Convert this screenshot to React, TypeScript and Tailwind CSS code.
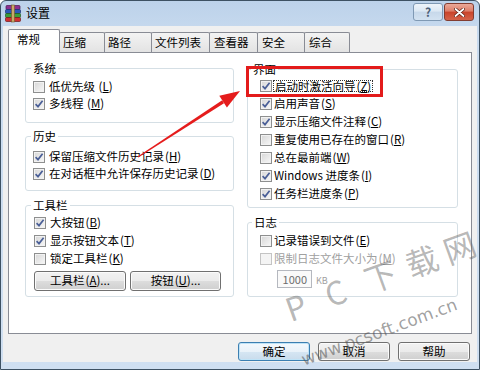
import React from 'react';

function Box({ checked, disabled }: { checked?: boolean; disabled?: boolean }) {
  return (
    <span
      className={
        disabled
          ? 'flex h-[12px] w-[12px] shrink-0 items-center justify-center border border-[#c4c4c4] bg-[#f4f4f4]'
          : 'flex h-[12px] w-[12px] shrink-0 items-center justify-center border border-[#8e8f8f] bg-[linear-gradient(135deg,#d6d6d6,#f8f8f8)] shadow-[inset_0_0_0_1px_#f2f2f2]'
      }
    >
      {checked && (
        <svg width="10" height="10" viewBox="0 0 10 10">
          <path d="M1.6 5.2 L4 7.6 L8.6 1.8" fill="none" stroke="#4a5f97" strokeWidth="1.7" />
        </svg>
      )}
    </span>
  );
}

function Label({ t, k, tail }: { t: string; k: string; tail?: string }) {
  return (
    <>
      {t}
      <span className="ml-[1px]">(</span>
      <u>{k}</u>)
      {tail}
    </>
  );
}

function Row({
  t,
  k,
  checked,
  disabled,
  focus,
  h = 'h-[17px]',
  gap = 'gap-[4px]',
}: {
  t: string;
  k: string;
  checked?: boolean;
  disabled?: boolean;
  focus?: boolean;
  h?: string;
  gap?: string;
}) {
  return (
    <div className={`flex ${h} items-center ${gap}`}>
      <Box checked={checked} disabled={disabled} />
      <span
        className={
          (disabled ? 'text-[#a0a0a0] ' : 'text-black ') +
          (focus ? 'border border-dotted border-[#333] px-[1px] leading-[10px]' : 'leading-none')
        }
      >
        <Label t={t} k={k} />
      </span>
    </div>
  );
}

function WinButton({ children, def, w = 'w-[72px]' }: { children: React.ReactNode; def?: boolean; w?: string }) {
  return (
    <div
      className={
        `flex h-[19px] ${w} items-center justify-center rounded-[3px] border text-[11.5px] leading-none text-black ` +
        (def
          ? 'border-[#3c7fb1] bg-[linear-gradient(#f4f9fd_0%,#e9f2f9_50%,#d6e6f3_51%,#c9dcec_100%)] shadow-[inset_0_0_0_1px_#bfe3f7]'
          : 'border-[#707070] bg-[linear-gradient(#f2f2f2_0%,#ebebeb_50%,#dddddd_51%,#cfcfcf_100%)] shadow-[inset_0_0_0_1px_#fbfbfb]')
      }
    >
      {children}
    </div>
  );
}

function Tab({ label, w, selected, pl = 'pl-[3px]' }: { label: string; w: string; selected?: boolean; pl?: string }) {
  if (selected) {
    return (
      <div
        className={`relative z-10 mb-[-1px] flex h-[24px] ${w} items-center ${pl} rounded-t-[2px] border border-b-0 border-[#898c95] bg-white pb-[3px] text-[11.5px] leading-none text-black`}
      >
        {label}
      </div>
    );
  }
  return (
    <div
      className={`-ml-px flex h-[20px] ${w} items-center ${pl} rounded-t-[2px] border border-b-0 border-[#898c95] bg-[linear-gradient(#f3f3f3,#e3e3e3)] text-[11.5px] leading-none text-black`}
    >
      {label}
    </div>
  );
}

export default function App() {
  return (
    <div className="relative h-[370px] w-[480px] overflow-hidden bg-white font-['Noto_Sans_CJK_SC','Noto_Sans',sans-serif]">
      <div className="flex h-full w-full flex-col rounded-t-[6px] border border-[#3d5163] bg-[linear-gradient(#bcd2ea_0%,#c9dbef_10%,#cfdff1_100%)]">
        {/* title bar */}
        <div className="flex h-[25px] shrink-0 items-start pr-[5px]">
          <svg className="ml-[3px] mt-[3px]" width="19" height="19" viewBox="0 0 19 19">
            <rect x="2" y="1.5" width="14" height="4" rx="1" fill="#8b2f8f" stroke="#4a1650" strokeWidth="0.7" />
            <rect x="1.5" y="5.5" width="15" height="4" rx="1" fill="#2d58b8" stroke="#173070" strokeWidth="0.7" />
            <rect x="1.5" y="9.5" width="15" height="4" rx="1" fill="#3b9c3b" stroke="#1d5a1d" strokeWidth="0.7" />
            <rect x="1.5" y="13.5" width="15" height="4" rx="1" fill="#cf3030" stroke="#701818" strokeWidth="0.7" />
            <rect x="7.5" y="1" width="3" height="17" fill="#c9a86a" stroke="#6f5628" strokeWidth="0.6" />
          </svg>
          <span className="ml-[3px] mt-[6px] text-[12px] leading-none text-black">设置</span>
          <div className="flex-1" />
          <div className="mt-[2px] flex gap-[1px]">
            <div className="flex h-[18px] w-[30px] items-center justify-center rounded-[3px] border border-[#7f99b4] bg-[linear-gradient(#eef4fa_0%,#dce8f4_45%,#c7d8ea_50%,#d3e2f1_100%)] text-[12px] font-bold leading-none text-[#4b6078]">
              ?
            </div>
            <div className="flex h-[18px] w-[30px] items-center justify-center rounded-[3px] border border-[#823c30] bg-[linear-gradient(#eaa999_0%,#dd7d68_45%,#c9432a_50%,#d4634a_100%)]">
              <svg width="11" height="9" viewBox="0 0 11 9">
                <path d="M1.5 1 L9.5 8 M9.5 1 L1.5 8" stroke="#5a1d12" strokeWidth="3.2" strokeLinecap="round" />
                <path d="M1.5 1 L9.5 8 M9.5 1 L1.5 8" stroke="#ffffff" strokeWidth="1.8" strokeLinecap="round" />
              </svg>
            </div>
          </div>
        </div>

        {/* body */}
        <div className="mx-[2px] flex h-[336px] shrink-0 flex-col bg-[#f0f0f0] px-[5px] pt-[3px]">
          {/* tabs */}
          <div className="flex h-[23px] items-end">
            <Tab label="常规" w="w-[52px]" selected pl="pl-[8px]" />
            <Tab label="压缩" w="w-[46px]" />
            <Tab label="路径" w="w-[48px]" />
            <Tab label="文件列表" w="w-[59px]" />
            <Tab label="查看器" w="w-[49px]" pl="pl-[4px]" />
            <Tab label="安全" w="w-[48px]" pl="pl-[4px]" />
            <Tab label="综合" w="w-[46px]" pl="pl-[4px]" />
          </div>

          {/* panel */}
          <div className="flex h-[282px] items-start gap-[13px] border border-[#898c95] bg-white pl-[16px] pr-[13px] text-[11.5px] text-black">
            {/* left column */}
            <div className="mt-[9px] flex w-[209px] flex-col">
              <fieldset className="rounded-[3px] border border-[#d5dfe5] pb-[10px] pl-[7px] pt-[4px]">
                <legend className="-ml-[2px] px-[2px] text-[11.5px] leading-[12px]">系统</legend>
                <Row t="低优先级 " k="L" />
                <Row t="多线程 " k="M" checked />
              </fieldset>
              <fieldset className="mt-[7px] rounded-[3px] border border-[#d5dfe5] pb-[8px] pl-[7px] pt-[6px]">
                <legend className="-ml-[2px] px-[2px] text-[11.5px] leading-[12px]">历史</legend>
                <Row t="保留压缩文件历史记录" k="H" checked />
                <Row t="在对话框中允许保存历史记录" k="D" checked />
              </fieldset>
              <fieldset className="mt-[8px] rounded-[3px] border border-[#d5dfe5] pb-[5px] pl-[8px] pt-[3px]">
                <legend className="-ml-[3px] px-[2px] text-[11.5px] leading-[12px]">工具栏</legend>
                <Row t="大按钮" k="B" checked h="h-[18px]" />
                <Row t="显示按钮文本" k="T" checked h="h-[18px]" />
                <Row t="锁定工具栏" k="K" h="h-[18px]" />
                <div className="mt-[3px] flex gap-[4px]">
                  <div className="flex h-[20px] w-[92px] items-center justify-center rounded-[3px] border border-[#707070] bg-[linear-gradient(#f2f2f2_0%,#ebebeb_50%,#dddddd_51%,#cfcfcf_100%)] shadow-[inset_0_0_0_1px_#fbfbfb] leading-none">
                    <Label t="工具栏" k="A" tail="..." />
                  </div>
                  <div className="flex h-[20px] w-[91px] items-center justify-center rounded-[3px] border border-[#707070] bg-[linear-gradient(#f2f2f2_0%,#ebebeb_50%,#dddddd_51%,#cfcfcf_100%)] shadow-[inset_0_0_0_1px_#fbfbfb] leading-none">
                    <Label t="按钮" k="U" tail="..." />
                  </div>
                </div>
              </fieldset>
            </div>

            {/* right column */}
            <div className="mt-[10px] flex w-[211px] flex-col">
              <fieldset className="rounded-[3px] border border-[#d5dfe5] pb-[4px] pl-[12px] pt-[2px]">
                <legend className="-ml-[9px] px-[2px] text-[11.5px] leading-[12px]">界面</legend>
                <Row t="启动时激活向导" k="Z" checked focus h="h-[18px]" gap="gap-[1px]" />
                <Row t="启用声音" k="S" checked h="h-[18px]" gap="gap-[2px]" />
                <Row t="显示压缩文件注释" k="C" checked h="h-[18px]" gap="gap-[2px]" />
                <Row t="重复使用已存在的窗口" k="R" h="h-[18px]" gap="gap-[2px]" />
                <Row t="总在最前端" k="W" h="h-[18px]" gap="gap-[2px]" />
                <Row t="Windows 进度条" k="I" checked h="h-[18px]" gap="gap-[2px]" />
                <Row t="任务栏进度条" k="P" checked h="h-[18px]" gap="gap-[2px]" />
              </fieldset>
              <fieldset className="mt-[8px] rounded-[3px] border border-[#d5dfe5] pb-[8px] pl-[12px] pt-[4px]">
                <legend className="-ml-[8px] px-[2px] text-[11.5px] leading-[12px]">日志</legend>
                <Row t="记录错误到文件" k="E" h="h-[18px]" gap="gap-[2px]" />
                <Row t="限制日志文件大小为" k="M" disabled h="h-[18px]" gap="gap-[2px]" />
                <div className="ml-[17px] mt-[2px] flex items-end gap-[4px]">
                  <div className="flex h-[18px] w-[35px] items-center justify-end border border-[#b5b8bf] bg-[#fafafa] pr-[4px] text-[11px] leading-none text-[#6d6d6d]">
                    1000
                  </div>
                  <span className="mb-[3px] text-[9px] leading-none text-[#a0a0a0]">KB</span>
                </div>
              </fieldset>
            </div>
          </div>

          {/* bottom buttons */}
          <div className="mt-[8px] flex justify-end gap-[8px] pr-[2px]">
            <WinButton def>确定</WinButton>
            <WinButton>取消</WinButton>
            <WinButton>帮助</WinButton>
          </div>
        </div>
      </div>

      {/* red highlight annotation */}
      <div className="pointer-events-none absolute left-[246px] top-[66px] h-[31px] w-[137px] border-[3px] border-[#e31b1b]" />

      {/* red arrow annotation */}
      <svg className="pointer-events-none absolute left-0 top-0" width="480" height="370" viewBox="0 0 480 370">
        <polygon points="138.3,157.4 137.7,156.6 222.2,100.2 224.0,103.2" fill="#e51c1c" />
        <polygon points="240,91 226.9,107.6 219.3,95.8" fill="#e51c1c" />
      </svg>

      {/* watermark */}
      <div className="pointer-events-none absolute left-[286px] top-[293px] flex origin-left -rotate-[20deg] items-center text-[32px] leading-none text-[rgba(95,95,95,0.45)]">
        <span className="w-[42px]">P</span>
        <span className="w-[42px]">C</span>
        <span className="w-[44px]">下</span>
        <span className="w-[40px]">载</span>
        <span className="w-[40px]">网</span>
      </div>
      <div className="pointer-events-none absolute left-[302px] top-[352px] origin-left -rotate-[20deg] whitespace-nowrap font-['DejaVu_Sans',sans-serif] text-[17px] leading-none text-[rgba(80,80,80,0.55)]">
        www.pcsoft.com.cn
      </div>
    </div>
  );
}
